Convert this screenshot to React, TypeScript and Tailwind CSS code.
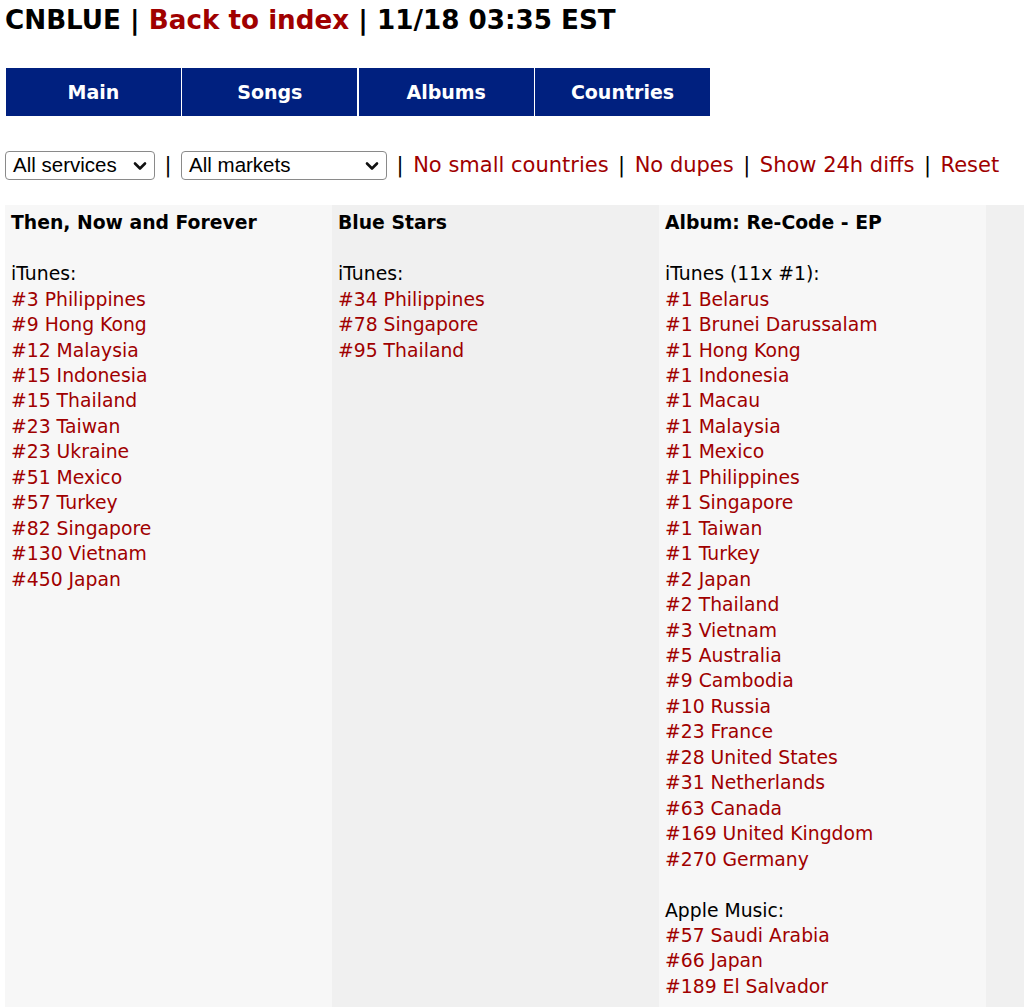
import React from 'react';

interface Chart {
  title: string;
  groups: { label: string; entries: string[] }[];
}

const charts: Chart[] = [
  {
    title: 'Then, Now and Forever',
    groups: [
      {
        label: 'iTunes:',
        entries: [
          '#3 Philippines',
          '#9 Hong Kong',
          '#12 Malaysia',
          '#15 Indonesia',
          '#15 Thailand',
          '#23 Taiwan',
          '#23 Ukraine',
          '#51 Mexico',
          '#57 Turkey',
          '#82 Singapore',
          '#130 Vietnam',
          '#450 Japan',
        ],
      },
    ],
  },
  {
    title: 'Blue Stars',
    groups: [
      {
        label: 'iTunes:',
        entries: ['#34 Philippines', '#78 Singapore', '#95 Thailand'],
      },
    ],
  },
  {
    title: 'Album: Re-Code - EP',
    groups: [
      {
        label: 'iTunes (11x #1):',
        entries: [
          '#1 Belarus',
          '#1 Brunei Darussalam',
          '#1 Hong Kong',
          '#1 Indonesia',
          '#1 Macau',
          '#1 Malaysia',
          '#1 Mexico',
          '#1 Philippines',
          '#1 Singapore',
          '#1 Taiwan',
          '#1 Turkey',
          '#2 Japan',
          '#2 Thailand',
          '#3 Vietnam',
          '#5 Australia',
          '#9 Cambodia',
          '#10 Russia',
          '#23 France',
          '#28 United States',
          '#31 Netherlands',
          '#63 Canada',
          '#169 United Kingdom',
          '#270 Germany',
        ],
      },
      {
        label: 'Apple Music:',
        entries: ['#57 Saudi Arabia', '#66 Japan', '#189 El Salvador'],
      },
    ],
  },
];

const tabs = ['Main', 'Songs', 'Albums', 'Countries'];
const filters = ['No small countries', 'No dupes', 'Show 24h diffs', 'Reset'];

const Chevron = () => (
  <svg width="14" height="10" viewBox="0 0 14 10" fill="none">
    <path d="M2 2.5 L7 7.5 L12 2.5" stroke="#111" strokeWidth="2.6" strokeLinecap="round" strokeLinejoin="round" />
  </svg>
);

const FakeSelect = ({ label, width }: { label: string; width: string }) => (
  <div
    className={`${width} h-[29px] flex items-center justify-between pl-[7px] pr-[7px] bg-white border border-[#8a8a8a] rounded-[4px] text-[20.5px] text-black`}
    style={{ fontFamily: '"Liberation Sans", Arial, sans-serif' }}
  >
    <span>{label}</span>
    <Chevron />
  </div>
);

const Sep = () => <span className="text-black">|</span>;

export default function App() {
  return (
    <div
      className="h-[1007px] w-[1024px] overflow-hidden bg-white text-black pl-[5px]"
      style={{ fontFamily: '"DejaVu Sans", Verdana, sans-serif' }}
    >
      <div className="pt-[5px] text-[26.2px] leading-[30px] font-bold whitespace-nowrap">
        CNBLUE | <a className="text-[#a00000]">Back to index</a> | 11/18 03:35 EST
      </div>

      <div className="mt-[33px] ml-[1px] flex gap-[1.33px]">
        {tabs.map((t) => (
          <div
            key={t}
            className="w-[175px] h-[48px] bg-[#00207f] text-white font-bold text-[19px] flex items-center justify-center"
          >
            {t}
          </div>
        ))}
      </div>

      <div className="mt-[34px] flex items-center gap-[9.5px] text-[21px] whitespace-nowrap">
        <FakeSelect label="All services" width="w-[150px]" />
        <Sep />
        <FakeSelect label="All markets" width="w-[206px]" />
        {filters.map((f) => (
          <React.Fragment key={f}>
            <Sep />
            <a className="text-[#a00000]">{f}</a>
          </React.Fragment>
        ))}
      </div>

      <div className="mt-[23.5px] flex w-[1400px] min-h-[820px] text-[18.8px] leading-[25.45px]">
        {charts.map((c, i) => (
          <div
            key={c.title}
            className={`w-[327px] shrink-0 pt-[5.3px] px-[6px] ${i % 2 === 0 ? 'bg-[#f7f7f7]' : 'bg-[#f0f0f0]'}`}
          >
            <div className="font-bold">{c.title}</div>
            {c.groups.map((g) => (
              <div key={g.label}>
                <div className="h-[25.45px]" />
                <div>{g.label}</div>
                {g.entries.map((e) => (
                  <div key={e}>
                    <a className="text-[#a00000]">{e}</a>
                  </div>
                ))}
              </div>
            ))}
          </div>
        ))}
        <div className="w-[327px] shrink-0 bg-[#f0f0f0]" />
      </div>
    </div>
  );
}
